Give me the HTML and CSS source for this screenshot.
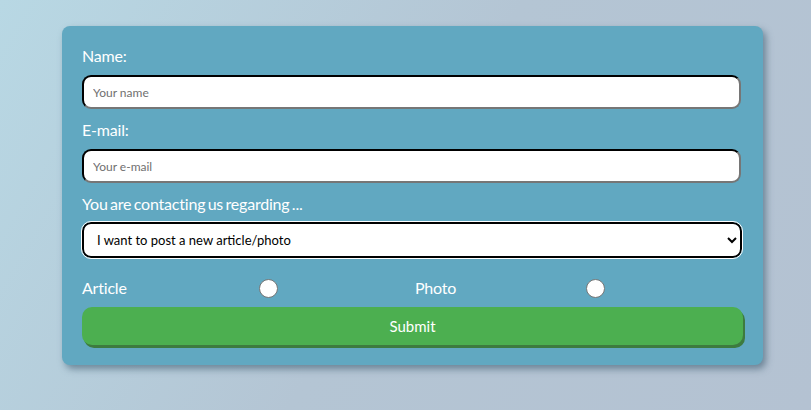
FILE: index.html
```html
<!DOCTYPE html>
<html>
<head>
<meta charset="utf-8">
<link rel="stylesheet" href="styles.css">
</head>
<body>
<form class="card">
  <label class="lbl">Name:</label>
  <input class="field" type="text" placeholder="Your name">
  <label class="lbl">E-mail:</label>
  <input class="field" type="text" placeholder="Your e-mail">
  <label class="lbl">You are contacting us regarding ...</label>
  <select class="sel">
    <option>I want to post a new article/photo</option>
  </select>
  <div class="radios">
    <div class="half"><span class="rlabel">Article</span><input class="radio" type="radio" name="t"></div>
    <div class="half"><span class="rlabel">Photo</span><input class="radio" type="radio" name="t"></div>
  </div>
  <button class="submit" type="button">Submit</button>
</form>
</body>
</html>
```
FILE: styles.css
```css
html, body { margin: 0; height: 100%; }
body {
  background: linear-gradient(120deg, #b8d8e4 0%, #b4c5d4 50%, #b4c2d2 100%);
  font-family: "Lato", "Open Sans", sans-serif;
  overflow: hidden;
}
.card {
  box-sizing: border-box;
  width: 701px;
  margin: 26px 0 0 62px;
  padding: 20px 22px 20px 20px;
  background: #61a8c1;
  border-radius: 8px;
  box-shadow: 3px 4px 7px rgba(60, 90, 110, 0.6);
  display: flex;
  flex-direction: column;
}
.lbl {
  color: #fff;
  font-size: 16px;
  line-height: 20px;
  margin-bottom: 9px;
  letter-spacing: -0.2px;
  word-spacing: -1.5px;
}
.field {
  box-sizing: border-box;
  height: 34px;
  width: 659px;
  border: 2px inset #767676;
  border-top-color: #1e1e1e;
  border-left-color: #1e1e1e;
  border-radius: 9px;
  padding: 0 9px;
  font-family: inherit;
  font-size: 12px;
  margin-bottom: 11px;
  background: #fff;
}
.field::placeholder { color: #707070; }
.sel {
  box-sizing: border-box;
  height: 36px;
  width: 660px;
  border: 2px solid #000;
  outline: 1px solid #fff;
  border-radius: 9px;
  padding: 0 9px;
  font-family: inherit;
  font-size: 13px;
  color: #000;
  background: #fff;
  margin-top: -1px;
}
.radios {
  display: grid;
  grid-template-columns: 333px 1fr;
  margin-top: 20px;
  height: 20px;
  align-items: center;
}
.half { display: flex; align-items: center; }
.rlabel { color: #fff; font-size: 16px; line-height: 20px; letter-spacing: -0.2px; }
.half:first-child .rlabel { width: 177px; }
.half:last-child .rlabel { width: 171px; }
.radio {
  appearance: none;
  -webkit-appearance: none;
  width: 19px; height: 19px;
  margin: 0;
  border-radius: 50%;
  background: #fff;
  border: 1px solid #767676;
}
.submit {
  margin-top: 9px;
  height: 38px;
  width: 661px;
  border: none;
  border-radius: 10px;
  background: #4caf50;
  color: #fff;
  font-family: inherit;
  font-size: 15px;
  box-shadow: 2px 3px 0 #3d7b3f;
}
```
